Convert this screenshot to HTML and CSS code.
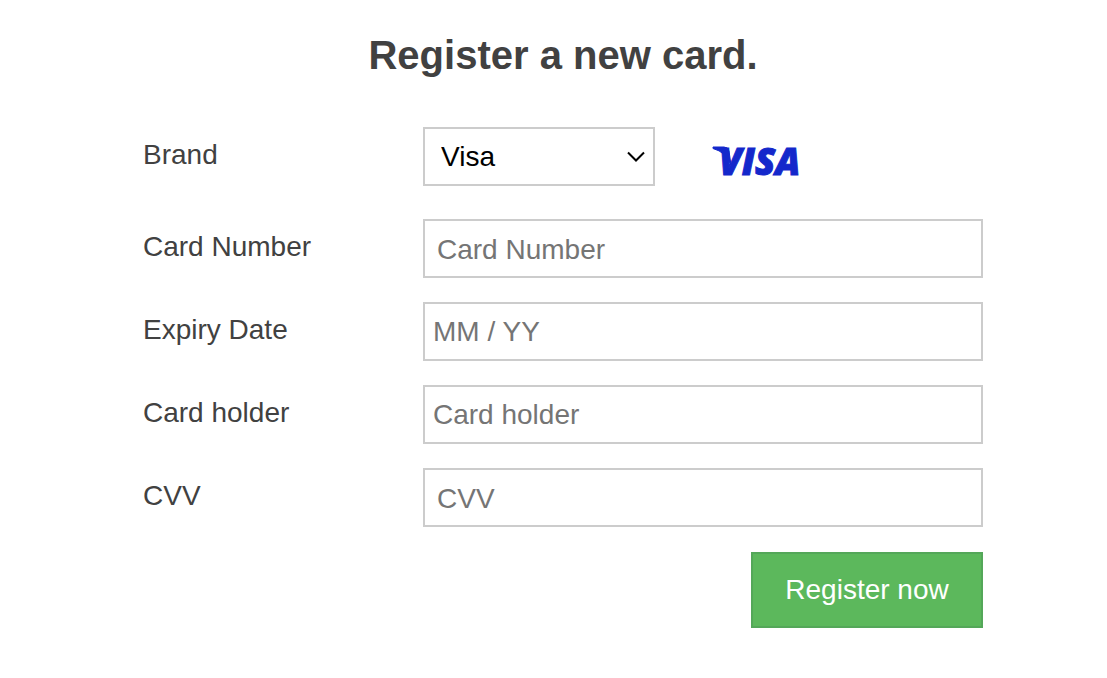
FILE: index.html
```html
<!DOCTYPE html>
<html lang="en">
<head>
<meta charset="utf-8">
<meta name="viewport" content="width=device-width, initial-scale=1">
<title>Register a new card</title>
<link rel="stylesheet" href="styles.css">
</head>
<body>
<main class="page">
  <h1 class="title">Register a new card.</h1>
  <form class="card-form">
    <div class="row row-brand">
      <label class="label" for="brand">Brand</label>
      <div class="brand">
        <div class="select-wrap">
          <select class="field select" id="brand"><option>Visa</option></select>
          <svg class="chevron" viewBox="0 0 18 12" aria-hidden="true"><path d="M1 1.5 9 9.5 17 1.5"/></svg>
        </div>
        <svg class="logo" viewBox="0 0 88 32" role="img" aria-label="Visa">
          <path d="M0 1H11Q15 1 16 5L18 19Q13 6 0 2.500Z"/>
          <text x="6" y="29">VISA</text>
        </svg>
      </div>
    </div>
    <div class="row">
      <label class="label" for="number">Card Number</label>
      <input class="field secure" id="number" type="text" placeholder="Card Number">
    </div>
    <div class="row">
      <label class="label" for="expiry">Expiry Date</label>
      <input class="field" id="expiry" type="text" placeholder="MM / YY">
    </div>
    <div class="row">
      <label class="label" for="holder">Card holder</label>
      <input class="field" id="holder" type="text" placeholder="Card holder">
    </div>
    <div class="row">
      <label class="label" for="cvv">CVV</label>
      <input class="field secure" id="cvv" type="text" placeholder="CVV">
    </div>
    <button class="submit" type="button">Register now</button>
  </form>
</main>
</body>
</html>
```
FILE: styles.css
```css
* {
  box-sizing: border-box;
}

body {
  margin: 0;
  background: #fff;
  color: #414141;
  font: 28px/32px "Liberation Sans", Arial, sans-serif;
}

.page {
  padding: 31px 124px 48px 143px;
}

.title {
  margin: 0 0 48px;
  font-size: 40px;
  line-height: 48px;
  text-align: center;
}

.card-form {
  display: flex;
  flex-direction: column;
  gap: 24px;
}

.row {
  display: grid;
  grid-template-columns: 1fr 2fr;
}

.row-brand {
  margin-bottom: 9px;
}

.label {
  padding-top: 12px;
}

.field {
  width: 100%;
  min-width: 0;
  height: 59px;
  margin: 0;
  padding: 0 8px;
  border: 2px solid #ccc;
  border-radius: 0;
  background: #fff;
  color: #000;
  font: inherit;
}

.field::placeholder {
  color: #757575;
  opacity: 1;
}

.secure {
  padding: 2px 12px 0;
}

.brand {
  display: flex;
  align-items: center;
  gap: 58px;
}

.select-wrap {
  display: grid;
  align-items: center;
  width: 232px;
}

.select {
  grid-area: 1 / 1;
  padding: 0 16px;
  appearance: none;
}

.chevron {
  grid-area: 1 / 1;
  justify-self: end;
  width: 18px;
  height: 12px;
  margin-right: 10px;
  fill: none;
  stroke: #000;
  stroke-width: 2;
  pointer-events: none;
}

.logo {
  width: 88px;
  height: 32px;
  margin-top: 10px;
  overflow: visible;
  fill: #1428cb;
  stroke: #1428cb;
  stroke-width: 1;
  font: italic 800 37px "Open Sans", sans-serif;
}

.submit {
  align-self: flex-end;
  width: 232px;
  height: 76px;
  margin-top: 1px;
  border: 2px solid #54a759;
  background: #5cb85c;
  color: #fff;
  font: inherit;
}
```
